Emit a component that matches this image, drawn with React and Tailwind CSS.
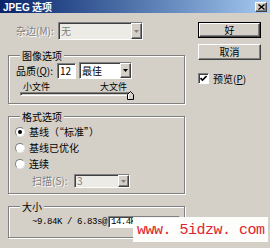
const raised =
  'border border-t-white border-l-white border-r-[#404040] border-b-[#404040] shadow-[inset_-1px_-1px_0_#808080]';
const sunken =
  'border border-t-[#808080] border-l-[#808080] border-r-white border-b-white shadow-[inset_1px_1px_0_#404040]';
const etched = 'border border-[#808080] shadow-[1px_1px_0_#fff,inset_1px_1px_0_#fff]';
const dim = 'text-[#808080] [text-shadow:1px_1px_0_#fff]';

const Arrow = ({ disabled }) => (
  <div className={`flex-none w-[11px] h-full flex items-center justify-center bg-[#d4d0c8] ${raised}`}>
    <svg width="5" height="3" viewBox="0 0 5 3">
      <polygon points="0,0 5,0 2.5,3" fill={disabled ? '#808080' : '#000'} />
    </svg>
  </div>
);

const Combo = ({ className, value, disabled }) => (
  <div className={`flex flex-none ${className} ${sunken} ${disabled ? 'bg-[#ecebe6]' : 'bg-white'}`}>
    <span className={`flex-1 pl-[2px] text-[10px] leading-none self-center ${disabled ? 'text-[#808080]' : 'text-black'}`}>
      {value}
    </span>
    <Arrow disabled={disabled} />
  </div>
);

const Group = ({ title, className, children }) => (
  <div className={`relative ${etched} ${className}`}>
    <span className="absolute -top-[7px] left-[11px] bg-[#d4d0c8] px-[2px] text-[10px] leading-[13px]">{title}</span>
    {children}
  </div>
);

const Radio = ({ checked, label }) => (
  <div className="flex items-center h-[16px]">
    <div className="ml-[6px] w-[10px] h-[10px] rounded-full bg-white border border-t-[#808080] border-l-[#808080] border-r-[#e8e8e8] border-b-[#e8e8e8] flex items-center justify-center">
      {checked && <div className="w-[4px] h-[4px] rounded-full bg-black" />}
    </div>
    <span className="ml-[4px] text-[10px] leading-none">{label}</span>
  </div>
);

export default function App() {
  return (
    <div className="relative w-[270px] h-[248px] overflow-hidden whitespace-nowrap bg-[#d4d0c8] text-black font-['Noto_Sans_CJK_SC',sans-serif]">
      {/* title bar */}
      <div className="flex items-center h-[13px] bg-gradient-to-r from-[#0a246a] to-[#a6caf0]">
        <span className="ml-[3px] text-[10px] leading-[13px] font-bold text-white">
          <span className="font-['Liberation_Sans',sans-serif]">JPEG</span> 选项
        </span>
        <div className={`ml-auto mr-[3px] w-[12px] h-[10px] bg-[#d4d0c8] flex items-center justify-center ${raised}`}>
          <svg width="7" height="6" viewBox="0 0 7 6">
            <path d="M0.5 0.5 L6.5 5.5 M6.5 0.5 L0.5 5.5" stroke="#000" strokeWidth="1.4" />
          </svg>
        </div>
      </div>

      <div className="flex pl-[8px]">
        {/* left column */}
        <div className="w-[177px] mt-[9px]">
          <div className="flex items-center h-[18px]">
            <span className={`ml-[8px] w-[42px] flex-none text-[10px] leading-none ${dim}`}>杂边(M):</span>
            <Combo className="w-[85px] h-[18px]" value="无" disabled />
          </div>

          <Group title="图像选项" className="mt-[15px] h-[49px]">
            <div className="pt-[6px] flex items-center h-[23px]">
              <span className="ml-[7px] w-[41px] flex-none text-[10px] leading-none">品质(<u>Q</u>):</span>
              <div className={`flex-none w-[19px] h-[16px] bg-white pl-[2px] text-[10px] leading-[14px] ${sunken}`}>12</div>
              <Combo className="ml-[3px] w-[53px] h-[17px]" value="最佳" />
            </div>
            <div className="mt-[2px] ml-[14px] w-[104px] flex justify-between text-[9px] leading-[11px]">
              <span>小文件</span>
              <span>大文件</span>
            </div>
            <div className="relative ml-[11px] w-[112px] h-[4px]">
              <div className={`h-[4px] bg-[#d4d0c8] ${sunken}`} />
              <svg className="absolute right-[-2px] top-[-1px]" width="7" height="9" viewBox="0 0 7 9">
                <polygon points="3.5,0.5 6.5,3.5 6.5,8.5 0.5,8.5 0.5,3.5" fill="#d4d0c8" stroke="#000" strokeWidth="1" />
                <polyline points="1.5,8 1.5,3.8 3.5,1.8" fill="none" stroke="#fff" strokeWidth="1" />
              </svg>
            </div>
          </Group>

          <Group title="格式选项" className="mt-[12px] h-[78px]">
            <div className="pt-[7px]">
              <Radio checked label="基线（“标准”）" />
              <Radio label="基线已优化" />
              <Radio label="连续" />
              <div className="flex items-center h-[14px] mt-[2px]">
                <span className={`ml-[23px] w-[42px] flex-none text-[10px] leading-none ${dim}`}>扫描(S):</span>
                <Combo className="w-[56px] h-[14px]" value="3" disabled />
              </div>
            </div>
          </Group>

          <Group title="大小" className="mt-[12px] h-[32px]">
            <div className="pt-[9px] flex items-center h-[21px]">
              <span className="ml-[23px] w-[76px] flex-none font-['Liberation_Mono',monospace] text-[9px] tracking-[-0.4px] leading-none">
                ~9.84K / 6.83s@
              </span>
              <div className={`flex-none w-[72px] h-[12px] bg-white pl-[2px] font-['Liberation_Mono',monospace] text-[9px] tracking-[-0.5px] leading-[10px] ${sunken}`}>
                14.4Kb
              </div>
            </div>
          </Group>
        </div>

        {/* right column */}
        <div className="ml-[13px] mt-[9px] w-[63px]">
          <div className="border border-black">
            <div className={`h-[14px] flex items-center justify-center bg-[#d4d0c8] text-[10px] leading-none ${raised}`}>好</div>
          </div>
          <div className={`mt-[6px] h-[16px] flex items-center justify-center bg-[#d4d0c8] text-[10px] leading-none ${raised}`}>
            取消
          </div>
          <div className="mt-[12px] flex items-center h-[13px]">
            <div className={`w-[11px] h-[11px] bg-white flex items-center justify-center ${sunken}`}>
              <svg width="7" height="7" viewBox="0 0 7 7">
                <path d="M0.5 3 L2.5 5 L6.5 1" fill="none" stroke="#000" strokeWidth="1.6" />
              </svg>
            </div>
            <span className="ml-[4px] text-[10px] leading-none">预览(<u>P</u>)</span>
          </div>
        </div>
      </div>

      {/* watermark */}
      <div className="absolute left-[133px] top-[217px] w-[135px] h-[25px] bg-white/95 pl-[4px] pt-[6px] font-['Liberation_Mono',monospace] text-[15px] tracking-[-0.5px] leading-[16px] text-[#e0242c]">
        www. 5idzw. com
      </div>
    </div>
  );
}
